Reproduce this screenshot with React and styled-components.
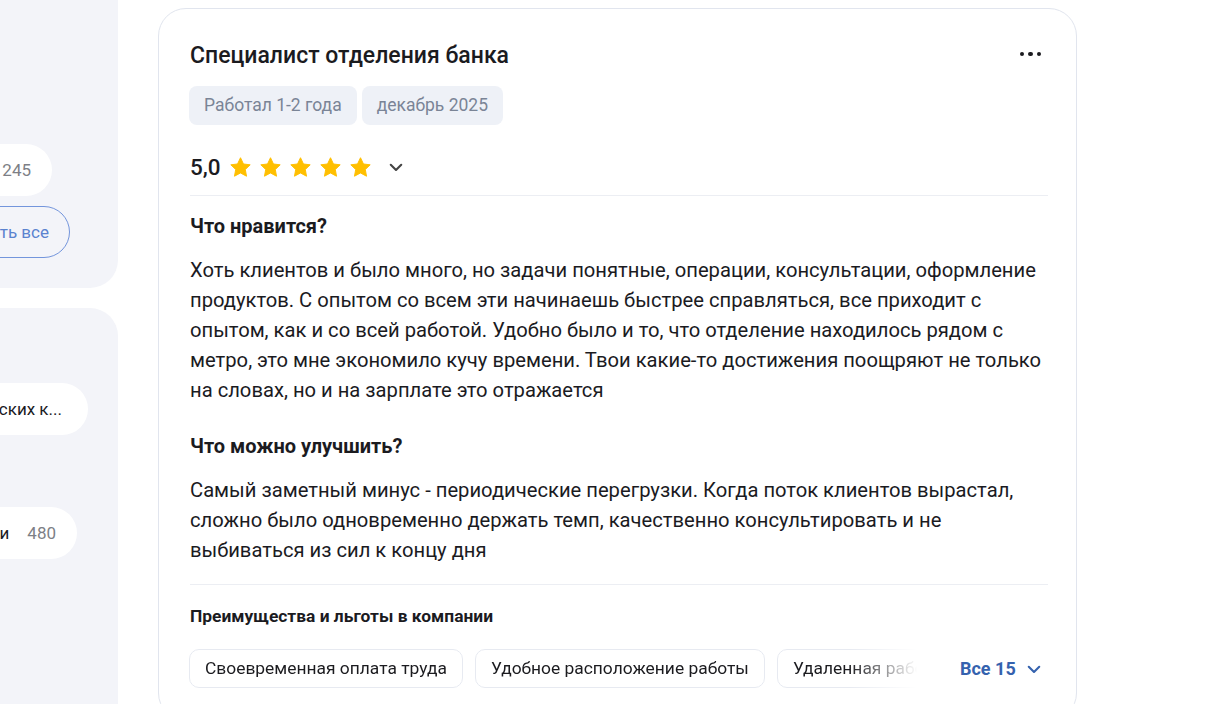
import React from "react";
import styled, { createGlobalStyle } from "styled-components";

const GlobalStyle = createGlobalStyle`
  html, body {
    margin: 0;
    padding: 0;
    background: #fff;
    overflow: hidden;
  }
  body {
    font-family: Roboto, "Noto Sans", Arial, sans-serif;
    color: #1b1b1f;
  }
`;

const tags = ["Работал 1-2 года", "декабрь 2025"];

const benefits = [
  "Своевременная оплата труда",
  "Удобное расположение работы",
  "Удаленная работа",
];

const Star = () => (
  <svg width="23" height="23" viewBox="0 0 24 24">
    <path
      d="M12 1.8l3.1 6.5 7 .9-5.1 4.9 1.3 7L12 17.7l-6.3 3.4 1.3-7L1.9 9.2l7-.9L12 1.8z"
      fill="#ffbf00"
      stroke="#ffbf00"
      strokeWidth="1"
      strokeLinejoin="round"
    />
  </svg>
);

const Chevron = ({ color = "#444", size = 14 }) => (
  <svg width={size} height={size} viewBox="0 0 24 24" fill="none">
    <path
      d="M5 9l7 7 7-7"
      stroke={color}
      strokeWidth="2.8"
      strokeLinecap="round"
      strokeLinejoin="round"
    />
  </svg>
);

const App = () => {
  return (
    <>
      <GlobalStyle />
      <Page>
        <Sidebar>
          <Panel $first>
            <SideRow $inset={66}>
              <Pill>
                Отзывы о работе в банке
                <Count>245</Count>
              </Pill>
            </SideRow>
            <SideRow $inset={48}>
              <OutlineButton>Показать все</OutlineButton>
            </SideRow>
          </Panel>
          <Panel $grow>
            <SideRow $inset={30}>
              <Pill>Специалист банковских к...</Pill>
            </SideRow>
            <SideRow $inset={41} $gapTop={72}>
              <Pill>
                Работа в отделении
                <Count>480</Count>
              </Pill>
            </SideRow>
          </Panel>
        </Sidebar>

        <Card>
          <TitleRow>
            <Title>Специалист отделения банка</Title>
            <MoreButton aria-label="Ещё">
              <Dot />
              <Dot />
              <Dot />
            </MoreButton>
          </TitleRow>

          <Tags>
            {tags.map((t) => (
              <Tag key={t}>{t}</Tag>
            ))}
          </Tags>

          <RatingRow>
            <Score>5,0</Score>
            <Stars>
              {[0, 1, 2, 3, 4].map((i) => (
                <Star key={i} />
              ))}
            </Stars>
            <ChevronWrap>
              <Chevron size={18} />
            </ChevronWrap>
          </RatingRow>

          <Divider />

          <SectionTitle>Что нравится?</SectionTitle>
          <Body>
            Хоть клиентов и было много, но задачи понятные, операции, консультации, оформление
            продуктов. С опытом со всем эти начинаешь быстрее справляться, все приходит с
            опытом, как и со всей работой. Удобно было и то, что отделение находилось рядом с
            метро, это мне экономило кучу времени. Твои какие-то достижения поощряют не только
            на словах, но и на зарплате это отражается
          </Body>

          <SectionTitle $spaced>Что можно улучшить?</SectionTitle>
          <Body>
            Самый заметный минус - периодические перегрузки. Когда поток клиентов вырастал,
            сложно было одновременно держать темп, качественно консультировать и не
            выбиваться из сил к концу дня
          </Body>

          <Divider $bottom />

          <BenefitsTitle>Преимущества и льготы в компании</BenefitsTitle>
          <BenefitsRow>
            <Chips>
              {benefits.map((b) => (
                <Chip key={b}>{b}</Chip>
              ))}
            </Chips>
            <AllButton>
              Все 15
              <Chevron color="#3562ae" size={18} />
            </AllButton>
          </BenefitsRow>
        </Card>
      </Page>
    </>
  );
};

const Page = styled.div`
  display: flex;
  gap: 40px;
  align-items: stretch;
  min-height: 704px;
`;

const Sidebar = styled.div`
  width: 118px;
  flex-shrink: 0;
  display: flex;
  flex-direction: column;
  gap: 20px;
  overflow: hidden;
`;

const Panel = styled.div`
  background: #f3f4f9;
  display: flex;
  flex-direction: column;
  gap: 10px;
  padding: ${(p) => (p.$first ? "144px 0 30px" : "75px 0 0")};
  border-radius: ${(p) => (p.$first ? "0 0 28px 0" : "0 28px 0 0")};
  flex: ${(p) => (p.$grow ? 1 : "none")};
`;

const SideRow = styled.div`
  display: flex;
  justify-content: flex-end;
  padding-right: ${(p) => p.$inset}px;
  margin-top: ${(p) => (p.$gapTop ? p.$gapTop - 10 : 0)}px;
`;

const Pill = styled.div`
  flex-shrink: 0;
  height: 52px;
  display: flex;
  align-items: center;
  gap: 18px;
  padding: 0 26px 0 20px;
  border-radius: 26px;
  background: #fff;
  font-size: 17px;
  color: #1b1b1f;
  white-space: nowrap;
`;

const Count = styled.span`
  color: #7d7f86;
  margin-right: -5px;
`;

const OutlineButton = styled.div`
  flex-shrink: 0;
  height: 50px;
  display: flex;
  align-items: center;
  padding: 0 20px;
  border: 1px solid #7395dc;
  border-radius: 26px;
  font-size: 17px;
  color: #5a82cf;
  white-space: nowrap;
`;

const Card = styled.div`
  width: 919px;
  box-sizing: border-box;
  flex-shrink: 0;
  margin-top: 8px;
  align-self: flex-start;
  border: 1px solid #e1e5ee;
  border-radius: 28px;
  padding: 33px 30px 32px 30px;
  background: #fff;
`;

const TitleRow = styled.div`
  display: flex;
  align-items: center;
  justify-content: space-between;
  padding-left: 1px;
`;

const Title = styled.h2`
  margin: 0;
  font-size: 23px;
  line-height: 28px;
  font-weight: 500;
  color: #1b1b1f;
`;

const MoreButton = styled.div`
  display: flex;
  gap: 4px;
  margin-right: 5px;
  margin-top: -4px;
`;

const Dot = styled.span`
  width: 4.5px;
  height: 4.5px;
  border-radius: 50%;
  background: #1b1b1f;
`;

const Tags = styled.div`
  display: flex;
  gap: 5px;
  margin-top: 16px;
`;

const Tag = styled.span`
  height: 39px;
  line-height: 39px;
  padding: 0 15px;
  border-radius: 8px;
  background: #eef1f7;
  color: #7a8496;
  font-size: 17.5px;
`;

const RatingRow = styled.div`
  display: flex;
  align-items: center;
  height: 30px;
  margin-top: 27px;
  padding-left: 1px;
`;

const Score = styled.span`
  font-size: 22.5px;
  font-weight: 500;
  color: #1b1b1f;
  margin-right: 8px;
`;

const Stars = styled.div`
  display: flex;
  gap: 7px;
`;

const ChevronWrap = styled.span`
  display: flex;
  margin-left: 15px;
`;

const Divider = styled.div`
  height: 1px;
  background: #eceef3;
  margin: ${(p) => (p.$bottom ? "19px 0 0" : "13px 0 0")};
  margin-left: 1px;
  margin-right: -2px;
`;

const SectionTitle = styled.h3`
  margin: ${(p) => (p.$spaced ? "28px" : "17px")} 0 0 1px;
  font-size: 20px;
  line-height: 26px;
  font-weight: 700;
  color: #1b1b1f;
`;

const Body = styled.p`
  margin: 16px 0 0 1px;
  font-size: 20.2px;
  line-height: 30px;
  color: #1b1b1f;
`;

const BenefitsTitle = styled.h4`
  margin: 20px 0 0 1px;
  font-size: 17.4px;
  line-height: 22px;
  font-weight: 700;
  color: #1b1b1f;
`;

const BenefitsRow = styled.div`
  display: flex;
  align-items: center;
  margin-top: 22px;
`;

const Chips = styled.div`
  width: 728px;
  display: flex;
  gap: 12px;
  overflow: hidden;
  mask-image: linear-gradient(to right, #000 660px, transparent 728px);
`;

const Chip = styled.span`
  flex-shrink: 0;
  height: 37px;
  line-height: 37px;
  padding: 0 15px;
  border: 1px solid #e7eaf1;
  border-radius: 10px;
  font-size: 17.4px;
  color: #1b1b1f;
  white-space: nowrap;
`;

const AllButton = styled.div`
  display: flex;
  align-items: center;
  gap: 9px;
  margin-left: 43px;
  font-size: 18px;
  font-weight: 700;
  color: #3562ae;
`;

export default App;
